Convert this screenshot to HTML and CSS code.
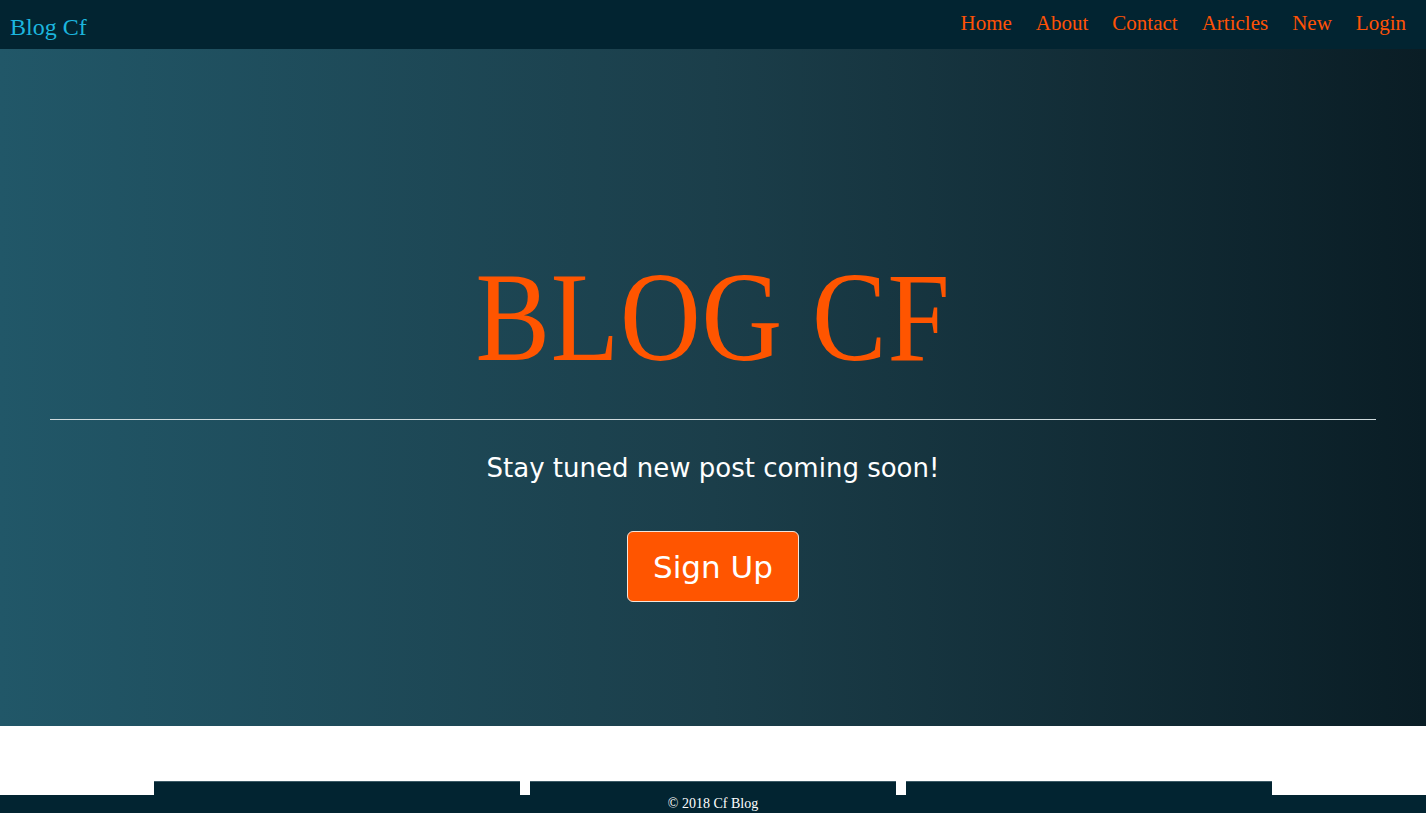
FILE: index.html
```html
<!DOCTYPE html>
<html lang="en">
<head>
<meta charset="utf-8">
<title>Blog Cf</title>
<link rel="stylesheet" href="styles.css">
</head>
<body>
<header class="topbar">
  <a class="brand" href="#">Blog Cf</a>
  <nav class="menu">
    <a href="#">Home</a>
    <a href="#">About</a>
    <a href="#">Contact</a>
    <a href="#">Articles</a>
    <a href="#">New</a>
    <a href="#">Login</a>
  </nav>
</header>
<section class="hero">
  <h1 class="hero-title">BLOG CF</h1>
  <hr class="hero-rule">
  <p class="hero-sub">Stay tuned new post coming soon!</p>
  <a class="btn-signup" href="#">Sign Up</a>
</section>
<section class="cards">
  <div class="card"></div>
  <div class="card"></div>
  <div class="card"></div>
</section>
<footer class="footer">© 2018 Cf Blog</footer>
</body>
</html>
```
FILE: styles.css
```css
* { box-sizing: border-box; }
html, body { margin: 0; padding: 0; }
body {
  background: #ffffff;
  font-family: "Liberation Serif", "Times New Roman", serif;
}
a { text-decoration: none; }

.topbar {
  height: 49px;
  background: #022431;
  display: flex;
  justify-content: space-between;
  align-items: flex-start;
  padding: 0 20px 0 10px;
}
.brand {
  margin-top: 15px;
  font-size: 24px;
  line-height: 24px;
  color: #1cb6df;
}
.menu {
  margin-top: 13px;
  display: flex;
  gap: 24px;
}
.menu a {
  font-size: 21px;
  line-height: 21px;
  color: #ff5206;
}

.hero {
  height: 677px;
  background: linear-gradient(to right, #215768 0%, #1b3e4a 50%, #0a1d25 100%);
  padding: 206px 50px 0;
  display: flex;
  flex-direction: column;
  align-items: center;
}
.hero-title {
  margin: 0;
  font-family: "Liberation Serif", "Times New Roman", serif;
  font-weight: normal;
  font-size: 127px;
  line-height: 124px;
  letter-spacing: 1px;
  color: #ff5500;
  transform: scaleX(0.88);
}
.hero-rule {
  align-self: stretch;
  margin: 40px 0 0;
  border: none;
  height: 1px;
  background: #cfdadd;
}
.hero-sub {
  margin: 33px 0 0;
  font-family: "DejaVu Sans", Verdana, sans-serif;
  font-size: 26px;
  color: #ffffff;
}
.btn-signup {
  margin-top: 48px;
  height: 71px;
  padding: 0 25px;
  display: flex;
  align-items: center;
  background: #ff5500;
  border: 1px solid #f3e6dc;
  border-radius: 6px;
  font-family: "DejaVu Sans", Verdana, sans-serif;
  font-size: 31px;
  color: #ffffff;
}

.cards {
  padding-top: 55px;
  padding-bottom: 40px;
  display: grid;
  grid-template-columns: repeat(3, 366px);
  gap: 10px;
  justify-content: center;
}
.card {
  height: 260px;
  background: #022431;
  border-top: 1px solid #3c5a66;
}

.footer {
  position: fixed;
  left: 0;
  right: 0;
  bottom: 0;
  height: 18px;
  background: #022431;
  color: #ffffff;
  text-align: center;
  font-size: 14px;
  line-height: 18px;
}
```
